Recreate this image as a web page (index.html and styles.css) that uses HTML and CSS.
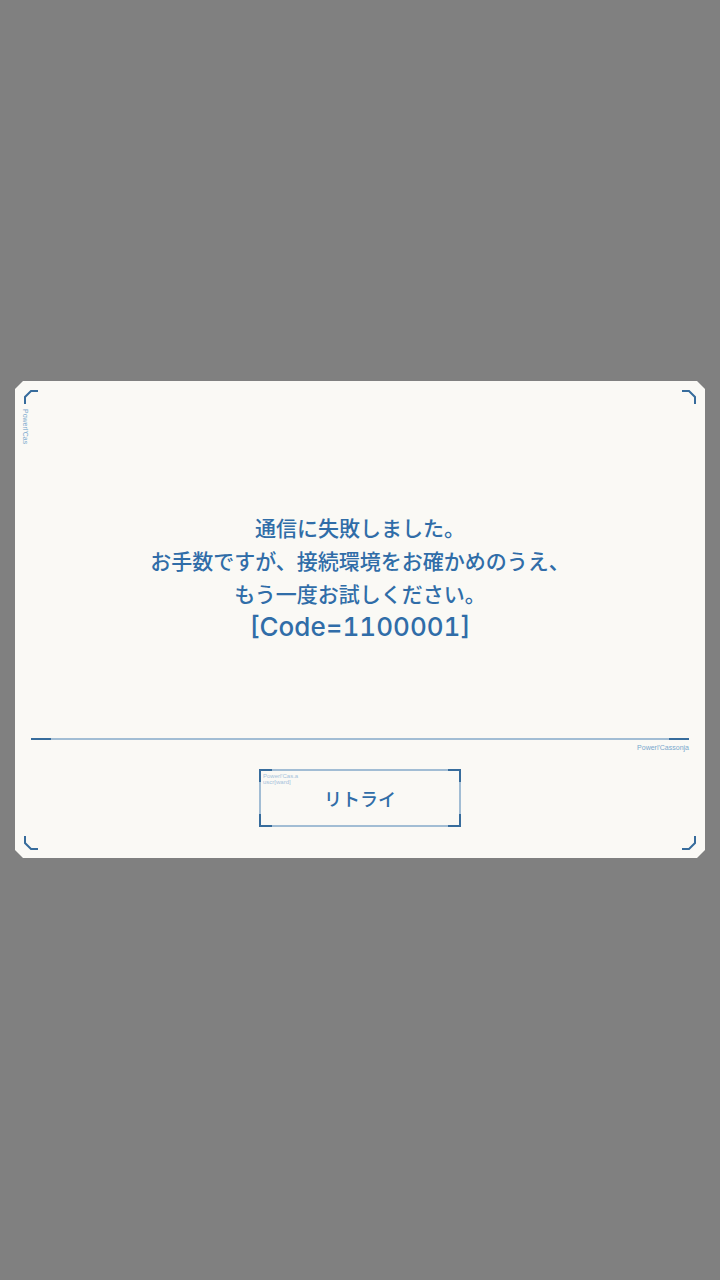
FILE: index.html
```html
<!DOCTYPE html>
<html lang="ja">
<head>
<meta charset="utf-8">
<meta name="viewport" content="width=device-width, initial-scale=1">
<title>通信エラー</title>
<link rel="stylesheet" href="styles.css">
</head>
<body>
<main class="screen">
  <section class="dialog" role="alertdialog" aria-labelledby="message">
    <svg class="corner top-left" viewBox="0 0 15 15" aria-hidden="true"><path d="M2 15V8L8 2H15"/></svg>
    <svg class="corner top-right" viewBox="0 0 15 15" aria-hidden="true"><path d="M2 15V8L8 2H15"/></svg>
    <svg class="corner bottom-left" viewBox="0 0 15 15" aria-hidden="true"><path d="M2 15V8L8 2H15"/></svg>
    <svg class="corner bottom-right" viewBox="0 0 15 15" aria-hidden="true"><path d="M2 15V8L8 2H15"/></svg>
    <span class="micro side-note">Powerl'Cas</span>
    <div class="body">
      <p class="message" id="message">通信に失敗しました。<br>お手数ですが、接続環境をお確かめのうえ、<br>もう一度お試しください。<br><span class="code">[Code=1100001]</span></p>
    </div>
    <footer class="footer">
      <div class="rule"></div>
      <span class="micro rule-note">Powerl'Cassonja</span>
      <button class="retry" type="button">
        <span class="micro button-note">Powerl'Cas.a<br>uscr[ward]</span>
        リトライ
      </button>
    </footer>
  </section>
</main>
</body>
</html>
```
FILE: styles.css
```css
:root {
  --ink: #306da8;
  --dark: #376c9c;
  --pale: #a2bdd4;
  --paper: #faf9f5;
}

* {
  box-sizing: border-box;
}

body {
  margin: 0;
  background: #808080;
  color: var(--ink);
  font-family: "Noto Sans CJK JP", sans-serif;
}

.screen {
  display: flex;
  align-items: center;
  justify-content: center;
  min-height: 100vh;
  padding: 0 15px 41px;
}

.dialog {
  position: relative;
  display: flex;
  flex-direction: column;
  width: 100%;
  max-width: 690px;
  padding: 0 16px 31px;
  background: var(--paper);
  clip-path: polygon(8px 0, calc(100% - 8px) 0, 100% 8px, 100% calc(100% - 8px), calc(100% - 8px) 100%, 8px 100%, 0 calc(100% - 8px), 0 8px);
}

.corner {
  position: absolute;
  width: 15px;
  height: 15px;
  fill: none;
  stroke: var(--dark);
  stroke-width: 2;
}

.top-left {
  top: 8px;
  left: 8px;
}

.top-right {
  top: 8px;
  right: 8px;
  transform: scaleX(-1);
}

.bottom-left {
  bottom: 7px;
  left: 8px;
  transform: scaleY(-1);
}

.bottom-right {
  right: 8px;
  bottom: 7px;
  transform: scale(-1);
}

.micro {
  color: #79a8cd;
  font-family: "Liberation Sans", sans-serif;
  font-size: 7px;
  line-height: 8px;
}

.side-note {
  position: absolute;
  top: 28px;
  left: 6px;
  writing-mode: vertical-rl;
}

.body {
  padding: 130px 0 95px;
}

.message {
  margin: 0;
  font-size: 21px;
  font-weight: 500;
  line-height: 33px;
  text-align: center;
}

.code {
  display: block;
  font-family: Inter, sans-serif;
  font-size: 26px;
  font-weight: 500;
  font-variant-numeric: tabular-nums;
}

.footer {
  display: flex;
  flex-direction: column;
  align-items: center;
}

.rule {
  width: 100%;
  height: 2px;
  background: linear-gradient(90deg, var(--dark) 20px, var(--pale) 20px calc(100% - 20px), var(--dark) calc(100% - 20px));
}

.rule-note {
  align-self: flex-end;
  margin: 4px 0 17px;
}

.retry {
  --arm: linear-gradient(var(--dark), var(--dark));
  position: relative;
  width: 202px;
  height: 58px;
  padding: 0;
  border: 0;
  background:
    var(--arm) 0 0 / 13px 2px,
    var(--arm) 0 0 / 2px 13px,
    var(--arm) 100% 0 / 13px 2px,
    var(--arm) 100% 0 / 2px 13px,
    var(--arm) 0 100% / 13px 2px,
    var(--arm) 0 100% / 2px 13px,
    var(--arm) 100% 100% / 13px 2px,
    var(--arm) 100% 100% / 2px 13px,
    var(--paper);
  background-repeat: no-repeat;
  color: var(--ink);
  font: 500 18px/58px "Noto Sans CJK JP", sans-serif;
  cursor: pointer;
}

.retry::before {
  content: "";
  position: absolute;
  inset: 0;
  border: 2px solid var(--pale);
  clip-path: polygon(13px 0, calc(100% - 13px) 0, calc(100% - 13px) 13px, 100% 13px, 100% calc(100% - 13px), calc(100% - 13px) calc(100% - 13px), calc(100% - 13px) 100%, 13px 100%, 13px calc(100% - 13px), 0 calc(100% - 13px), 0 13px, 13px 13px);
}

.button-note {
  position: absolute;
  top: 4px;
  left: 4px;
  color: #a5c2db;
  font-size: 6px;
  font-weight: 400;
  line-height: 6px;
  text-align: left;
}
```
